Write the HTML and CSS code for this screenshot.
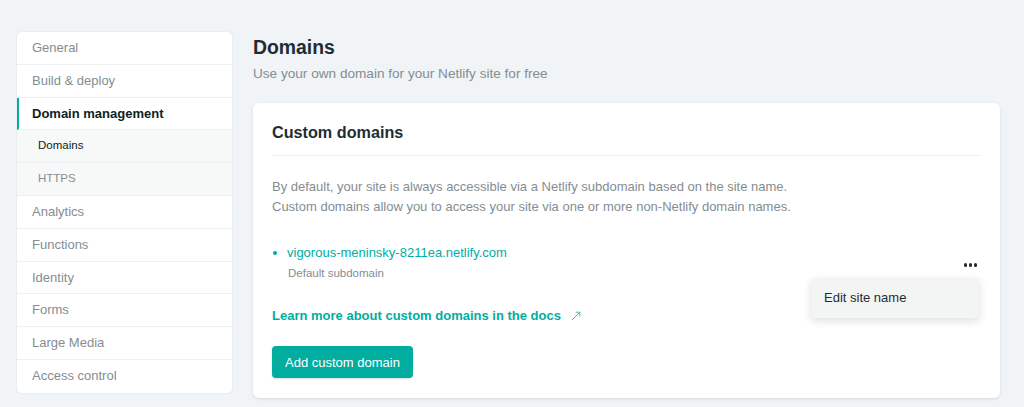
FILE: index.html
```html
<!DOCTYPE html>
<html>
<head>
<meta charset="utf-8">
<link rel="stylesheet" href="styles.css">
</head>
<body>
<div class="page">
  <nav class="sidebar">
    <a class="nav-item">General</a>
    <a class="nav-item">Build &amp; deploy</a>
    <a class="nav-item active">Domain management</a>
    <a class="nav-item sub current">Domains</a>
    <a class="nav-item sub">HTTPS</a>
    <a class="nav-item">Analytics</a>
    <a class="nav-item">Functions</a>
    <a class="nav-item">Identity</a>
    <a class="nav-item">Forms</a>
    <a class="nav-item">Large Media</a>
    <a class="nav-item last">Access control</a>
  </nav>
  <main class="main">
    <h1 class="title">Domains</h1>
    <p class="subtitle">Use your own domain for your Netlify site for free</p>
    <section class="card">
      <h2 class="card-title">Custom domains</h2>
      <p class="desc">By default, your site is always accessible via a Netlify subdomain based on the site name.<br>Custom domains allow you to access your site via one or more non-Netlify domain names.</p>
      <div class="domain-row">
        <div class="domain">
          <div class="domain-name"><span class="bullet"></span>vigorous-meninsky-8211ea.netlify.com</div>
          <div class="domain-note">Default subdomain</div>
        </div>
        <div class="more">
          <span class="dots"><i></i><i></i><i></i></span>
          <div class="menu">Edit site name</div>
        </div>
      </div>
      <a class="docs">Learn more about custom domains in the docs <svg class="arrow" width="10" height="10" viewBox="0 0 10 10"><path d="M1 9L8.6 1.4M4.6 1.2H8.8V5.4" fill="none" stroke="#35c2b4" stroke-width="1"/></svg></a>
      <button class="btn">Add custom domain</button>
    </section>
  </main>
</div>
</body>
</html>
```
FILE: styles.css
```css
* { box-sizing: border-box; }
body {
  margin: 0;
  background: #f0f4f7;
  font-family: "Liberation Sans", Arial, sans-serif;
  color: #0e1e25;
  height: 407px;
  overflow: hidden;
}
.page {
  display: flex;
  align-items: flex-start;
  gap: 21px;
  padding: 32px 24px 0 17px;
}
.sidebar {
  width: 215px;
  flex: none;
  background: #fff;
  border-radius: 5px;
  box-shadow: 0 0 0 1px #e9edf0;
  overflow: hidden;
  display: flex;
  flex-direction: column;
}
.nav-item {
  display: block;
  height: 32.8px;
  line-height: 31.8px;
  padding-left: 15px;
  font-size: 13px;
  color: #858d92;
  border-bottom: 1px solid #eef1f2;
}
.nav-item.last { border-bottom: none; }
.nav-item.active {
  color: #0e1e25;
  font-weight: bold;
  border-left: 2px solid #00ad9f;
  padding-left: 13px;
}
.nav-item.sub {
  background: #f7f8f8;
  padding-left: 21px;
  font-size: 11.5px;
}
.nav-item.current { color: #0e1e25; }
.main {
  flex: 1;
  padding-top: 3px;
}
.title {
  margin: 0;
  font-size: 19.4px;
  line-height: 24px;
  font-weight: bold;
  color: #1f2d33;
}
.subtitle {
  margin: 6px 0 0;
  font-size: 13.6px;
  line-height: 18px;
  color: #858d92;
}
.card {
  margin-top: 20px;
  background: #fff;
  border-radius: 6px;
  box-shadow: 0 1px 3px rgba(14, 30, 37, 0.12);
  padding: 20px 20px 20px 19px;
}
.card-title {
  margin: 0;
  font-size: 16.2px;
  line-height: 18px;
  font-weight: bold;
  color: #1f2d33;
  padding-bottom: 14px;
  border-bottom: 1px solid #eef1f2;
}
.desc {
  margin: 21px 0 0;
  font-size: 13px;
  line-height: 19.5px;
  color: #858d92;
}
.domain-row {
  margin-top: 27px;
  display: flex;
  justify-content: space-between;
  align-items: center;
}
.domain-name {
  display: flex;
  align-items: center;
  font-size: 13px;
  line-height: 20px;
  color: #00ad9f;
}
.bullet {
  width: 4px;
  height: 4px;
  border-radius: 50%;
  background: #00ad9f;
  margin: 0 10px 0 1px;
}
.domain-note {
  margin-top: 2px;
  padding-left: 16px;
  font-size: 11.5px;
  line-height: 16px;
  color: #858d92;
}
.more {
  position: relative;
  padding: 0 3px 0 0;
  margin-top: 6px;
}
.dots {
  display: flex;
  gap: 1.5px;
  height: 12px;
  align-items: center;
}
.dots i {
  width: 3.5px;
  height: 3.5px;
  border-radius: 50%;
  background: #1f2d33;
}
.menu {
  position: absolute;
  top: 19px;
  right: 1px;
  width: 168px;
  height: 40px;
  line-height: 40px;
  padding-left: 13px;
  background: #f3f5f5;
  border-radius: 4px;
  box-shadow: 0 3px 8px rgba(14, 30, 37, 0.14);
  font-size: 13px;
  color: #1f2d33;
  white-space: nowrap;
}
.docs {
  display: block;
  margin-top: 25px;
  font-size: 13px;
  line-height: 20px;
  font-weight: bold;
  color: #00ad9f;
}
.arrow {
  margin-left: 6px;
  vertical-align: -1px;
}
.btn {
  display: block;
  margin-top: 20px;
  height: 32px;
  padding: 0 13px;
  border: none;
  border-radius: 4px;
  background: #00ad9f;
  color: #fff;
  font-family: "Liberation Sans", Arial, sans-serif;
  font-size: 13px;
  box-shadow: 0 1px 2px rgba(14, 30, 37, 0.15);
}
```
